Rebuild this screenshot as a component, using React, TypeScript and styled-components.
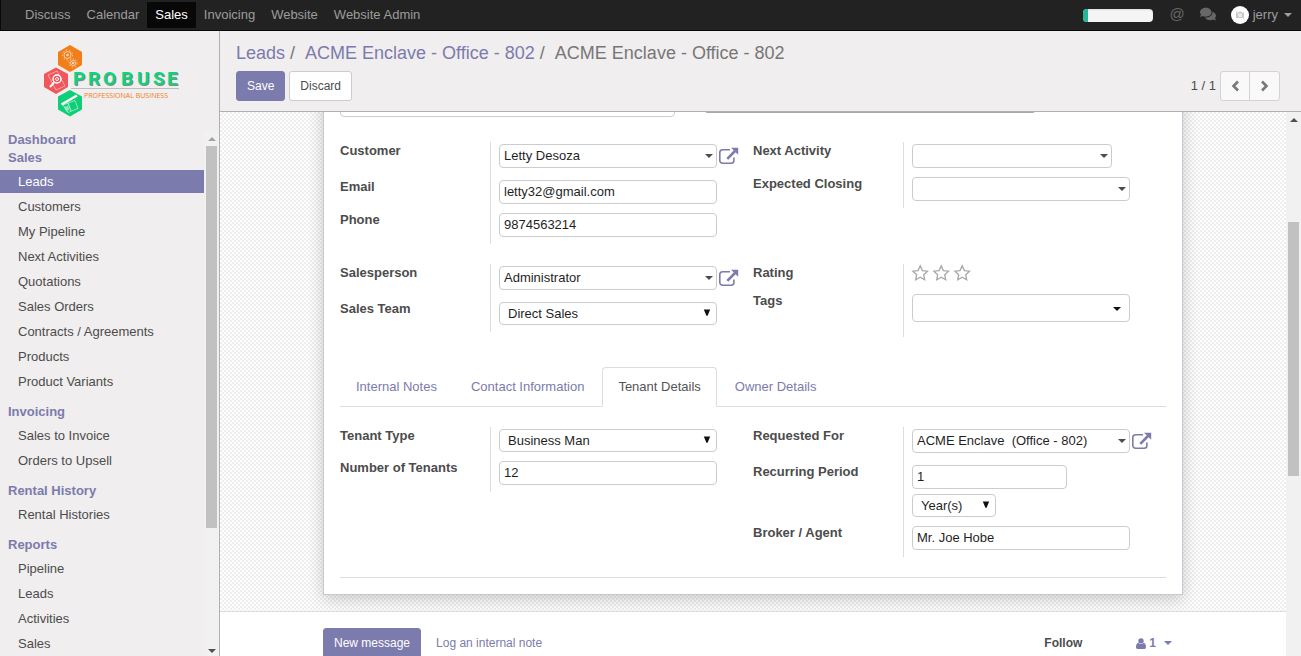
import React from "react";
import styled, { createGlobalStyle, css } from "styled-components";
import { FaComments } from "react-icons/fa";

const purple = "#7c7bad";

const Global = createGlobalStyle`
  *, *::before, *::after { box-sizing: border-box; }
  body { margin: 0; font: 13px/18px "Liberation Sans", Arial, sans-serif; color: #4c4c4c; background: #fff; }
  a { color: ${purple}; text-decoration: none; }
  ul { list-style: none; margin: 0; padding: 0; }
  input, select, button { font-family: inherit; }
`;

const Page = styled.div`
  display: flex;
  flex-direction: column;
  height: 100vh;
  overflow: hidden;
`;

/* ---------- top bar ---------- */
const TopBar = styled.header`
  display: flex;
  justify-content: space-between;
  flex: none;
  height: 31px;
  background: #222;
  border-bottom: 1px solid #080808;
  border-left: 1px solid #080808;
`;
const Menu = styled.nav`
  display: flex;
  padding: 2px 0 2px 16px;
`;
const MenuLink = styled.a<{ $active?: boolean }>`
  padding: 4px 8px;
  color: ${(p) => (p.$active ? "#fff" : "#9d9d9d")};
  background: ${(p) => (p.$active ? "#080808" : "transparent")};
`;
const Tray = styled.div`
  display: flex;
  align-items: center;
  padding-right: 9px;
  color: #9d9d9d;
`;
const Progress = styled.div`
  width: 70px;
  height: 13px;
  margin-right: 16px;
  border-radius: 4px;
  overflow: hidden;
  background: #f5f5f5;
  box-shadow: inset 0 1px 2px rgba(0, 0, 0, 0.1);
`;
const ProgressFill = styled.div`
  height: 100%;
  background: #21b799;
`;
const Caret = styled.span<{ $tone?: string }>`
  flex: none;
  border: 4px solid transparent;
  border-top-color: ${(p) => p.$tone || "currentColor"};
  border-bottom: 0;
`;
const TrayButton = styled.button`
  display: flex;
  align-items: center;
  padding: 0 0 3px;
  margin-right: 15px;
  border: 0;
  background: none;
  color: #676767;
  font-size: 15px;
  line-height: 24px;
`;
const UserButton = styled(TrayButton)`
  gap: 4px;
  margin: 0;
  padding: 0;
  color: #9d9d9d;
  font-size: 13px;
  ${Caret} { margin-left: 2px; }
`;

/* ---------- sidebar ---------- */
const Body = styled.div`
  display: flex;
  flex: 1;
  min-height: 0;
`;
const Side = styled.aside`
  display: flex;
  flex-direction: column;
  flex: none;
  width: 220px;
  background: #f0eeee;
  border-right: 1px solid #afafb6;
`;
const LogoLink = styled.a`
  display: flex;
  flex: none;
  height: 100px;
  padding: 8px 0 0 32px;
`;
const SideScroll = styled.div`
  display: flex;
  flex: 1;
  min-height: 0;
`;
const SideMenu = styled.nav`
  flex: 1;
  overflow: hidden;
`;
const SideHeading = styled.div`
  padding-left: 8px;
  font-weight: bold;
  color: ${purple};
`;
const SideList = styled.ul`
  padding: 2px 0 9px;
`;
const SideItem = styled.li`
  padding: 1px 0;
`;
const SideLink = styled.a<{ $active?: boolean }>`
  display: block;
  padding-left: 18px;
  line-height: 23px;
  color: ${(p) => (p.$active ? "#fff" : "#4c4c4c")};
  background: ${(p) => (p.$active ? purple : "transparent")};
`;

/* ---------- scroll bars ---------- */
const Track = styled.div`
  display: flex;
  flex-direction: column;
  flex: none;
  align-items: center;
  width: 15px;
  padding: 6px 0 3px;
  background: #f1f1f1;
`;
const Arrow = styled.span<{ $down?: boolean; $tone: string }>`
  flex: none;
  border: 4px solid transparent;
  ${(p) =>
    p.$down
      ? css`border-bottom: 0; border-top-color: ${p.$tone}; margin-top: auto;`
      : css`border-top: 0; border-bottom-color: ${p.$tone};`}
`;
const Thumb = styled.div<{ $top: number; $size: number }>`
  width: 11px;
  margin-top: ${(p) => p.$top}px;
  height: ${(p) => p.$size}%;
  background: #c1c1c1;
`;

/* ---------- control panel ---------- */
const Main = styled.main`
  display: flex;
  flex-direction: column;
  flex: 1;
  min-width: 0;
`;
const Panel = styled.div`
  flex: none;
  height: 81px;
  padding: 12px 21px 0 16px;
  background: #f0eeee;
  border-bottom: 1px solid #afafb6;
`;
const Crumbs = styled.ol`
  display: flex;
  margin: 0 0 8px;
  padding: 0;
  list-style: none;
  font-size: 18px;
  line-height: 20px;
  color: #777;
  white-space: pre;
`;
const PanelRow = styled.div`
  display: flex;
  align-items: center;
  gap: 4px;
`;
const Button = styled.button<{ $primary?: boolean }>`
  height: 30px;
  padding: 0 10px;
  border: 1px solid ${(p) => (p.$primary ? purple : "#ccc")};
  border-radius: 3px;
  background: ${(p) => (p.$primary ? purple : "#fff")};
  color: ${(p) => (p.$primary ? "#fff" : "#4c4c4c")};
  font-size: 12px;
`;
const Pager = styled.div`
  display: flex;
  align-items: center;
  gap: 4px;
  margin-left: auto;
`;
const PagerGroup = styled.div`
  display: flex;
`;
const PagerButton = styled.button`
  display: flex;
  align-items: center;
  justify-content: center;
  width: 30px;
  height: 30px;
  padding: 0;
  border: 1px solid #d3d3d3;
  background: #f9f9f9;
  color: #777;
  &:first-child { border-radius: 3px 0 0 3px; }
  &:last-child { border-radius: 0 3px 3px 0; margin-left: -1px; width: 31px; }
`;

/* ---------- form ---------- */
const ScrollRow = styled.div`
  display: flex;
  flex: 1;
  min-height: 0;
`;
const View = styled.div`
  flex: 1;
  min-width: 0;
  overflow: hidden;
`;
const SheetBackdrop = styled.div`
  display: flow-root;
  overflow: hidden;
  padding-bottom: 16px;
  border-bottom: 1px solid #ddd;
  background: repeating-conic-gradient(#eee 0 25%, #fff 0 50%) 0 0 / 4px 4px;
`;
const Sheet = styled.form`
  max-width: 860px;
  margin: -36px auto 0;
  padding: 16px;
  border: 1px solid #c8c8d3;
  background: #fff;
  box-shadow: 0 4px 16px rgba(0, 0, 0, 0.2);
`;
const field = css`
  height: 24px;
  border: 1px solid #ccc;
  border-radius: 4px;
  background: #fff;
  color: #1f1f1f;
  font-size: 13px;
`;
const TopFields = styled.div`
  display: grid;
  grid-template-columns: 335px 330px;
  gap: 30px;
  align-items: start;
  margin-bottom: 25px;
`;
const TextInput = styled.input<{ $width?: number; $short?: boolean }>`
  ${field}
  width: ${(p) => (p.$width ? p.$width + "px" : "100%")};
  padding: 0 4px 2px;
  ${(p) => p.$short && css`height: 20px; border-color: #aaa; border-radius: 2px;`}
`;
const Groups = styled.div<{ $gap: number }>`
  display: grid;
  grid-template-columns: 1fr 1fr;
  align-items: start;
  margin-bottom: ${(p) => p.$gap}px;
`;
const Row = styled.div<{ $height: number }>`
  display: grid;
  grid-template-columns: 150px 1fr;
  min-height: ${(p) => p.$height}px;
`;
const Label = styled.label`
  font-weight: bold;
`;
const Cell = styled.div`
  display: flex;
  align-items: flex-start;
  gap: 2px;
  padding: 2px 0 0 8px;
  border-left: 1px solid #ddd;
`;
const Stack = styled.div`
  display: flex;
  flex-direction: column;
  gap: 5px;
`;
const ComboBox = styled.div<{ $width?: number; $tall?: boolean }>`
  ${field}
  display: flex;
  align-items: center;
  width: ${(p) => p.$width || 218}px;
  padding-right: 3px;
  ${(p) => p.$tall && css`height: 28px; padding: 2px 8px 0 0;`}
`;
const ComboInput = styled.input`
  flex: 1;
  min-width: 0;
  height: 100%;
  padding: 0 0 2px 4px;
  border: 0;
  background: none;
  color: #1f1f1f;
  font-size: 13px;
`;
const SelectWrap = styled.div<{ $width: number }>`
  ${field}
  display: grid;
  align-items: center;
  width: ${(p) => p.$width}px;
  height: 23px;
  padding-right: 5px;
  > * { grid-area: 1 / 1; }
`;
const Select = styled.select`
  appearance: none;
  width: 100%;
  height: 21px;
  padding: 0 8px;
  border: 0;
  background: none;
  color: #1f1f1f;
  font-size: 13px;
`;
const SelectArrow = styled.svg`
  justify-self: end;
  margin-bottom: 2px;
  pointer-events: none;
`;
const IconButton = styled.button`
  display: flex;
  padding: 0;
  border: 0;
  background: none;
  color: ${purple};
`;
const Stars = styled.div`
  display: flex;
  gap: 4px;
`;
const Tabs = styled.div`
  display: flex;
  gap: 2px;
  height: 40px;
  margin-bottom: 20px;
  border-bottom: 1px solid #ddd;
`;
const Tab = styled.button<{ $active?: boolean }>`
  height: 40px;
  padding: 0 15px 2px;
  border: 1px solid ${(p) => (p.$active ? "#ddd" : "transparent")};
  border-bottom-color: ${(p) => (p.$active ? "#fff" : "transparent")};
  border-radius: 4px 4px 0 0;
  background: ${(p) => (p.$active ? "#fff" : "none")};
  color: ${(p) => (p.$active ? "#555" : purple)};
  font-size: 13px;
`;
const Rule = styled.hr`
  margin: 0;
  border: 0;
  border-top: 1px solid #ddd;
`;

/* ---------- chatter ---------- */
const Chatter = styled.section`
  display: flex;
  align-items: center;
  max-width: 860px;
  margin: 0 auto;
  padding: 16px 0;
  font-size: 12px;
`;
const LogLink = styled.a`
  margin-left: 15px;
`;
const Followers = styled.div`
  display: flex;
  align-items: center;
  gap: 54px;
  margin-left: auto;
  padding-right: 11px;
`;
const PlainButton = styled.button<{ $purple?: boolean }>`
  display: flex;
  align-items: center;
  gap: 3px;
  padding: 0;
  border: 0;
  background: none;
  font-size: 12px;
  font-weight: bold;
  color: ${(p) => (p.$purple ? purple : "#4c4c4c")};
  ${Caret} { margin-left: 5px; }
`;

const letters: [string, number][] = [["P", 73], ["R", 88], ["O", 103], ["B", 121], ["U", 137], ["S", 153], ["E", 167]];

const Logo = () => (
  <svg width="152" height="84" viewBox="32 39 152 84" role="img" aria-label="Probuse Professional Business">
    <path d="M70 45l12 7v13l-12 7-12-7V52z" fill="#f07f1a" />
    <path d="M56 67.500l12 6.500v13l-12 7-12-7V74z" fill="#f0565a" />
    <path d="M70 90l12 6.500v13l-12 7-12-7v-13z" fill="#0fcf76" />
    <g fill="none" stroke="#fff">
      <circle cx="67.500" cy="55" r="3.500" strokeOpacity=".6" />
      <circle cx="67.500" cy="55" r="5" strokeDasharray="1.500 2" strokeOpacity=".6" />
      <circle cx="67.500" cy="55" r=".8" />
      <circle cx="73" cy="63" r="2.500" strokeOpacity=".6" />
      <circle cx="73" cy="63" r="4" strokeDasharray="1.500 1.500" strokeOpacity=".6" />
      <circle cx="73" cy="63" r=".6" />
      <path d="M48 75l9-4 8 15-9 4z" strokeOpacity=".45" />
      <circle cx="57" cy="79" r="4" strokeWidth="1.500" />
      <circle cx="57" cy="79" r="1.500" strokeWidth="1" />
      <path d="M54 82.500L50 87" strokeWidth="2" />
      <path d="M61.500 104.500L77 95.500" strokeWidth="2.500" />
      <path d="M63 105l12-4.500 3 8-10 4z" strokeOpacity=".5" />
      <path d="M68 103l3 8" strokeOpacity=".7" />
    </g>
    <path d="M64 107l4-1.500 1.500 4-3 2z" fill="#fff" fillOpacity=".5" />
    <path d="M71 88.500h108" stroke="#bdbdbd" />
    <g fontFamily="Roboto, sans-serif" fontWeight="bold" fontSize="19">
      {letters.map(([letter, x]) => (
        <g key={letter}>
          <text x={x + 1} y="86" fill="#8a8a8a">{letter}</text>
          <text x={x} y="85" fill="#0fd47c">{letter}</text>
        </g>
      ))}
    </g>
    <text x="84" y="98" fontFamily="'Open Sans', sans-serif" fontSize="7" fill="#f07f1a">PROFESSIONAL BUSINESS</text>
  </svg>
);

const Avatar = () => (
  <svg width="18" height="18" viewBox="0 0 18 18" aria-hidden="true">
    <circle cx="9" cy="9" r="9" fill="#fff" />
    <path d="M5 6.500h2l1-1h2l1 1h2v5.500H5z" fill="#c9c9c9" />
    <circle cx="9" cy="9.200" r="2" fill="#eee" />
    <path d="M4 4l10 10" stroke="#e4e4e4" />
  </svg>
);

const Person = () => (
  <svg width="10" height="11" viewBox="0 0 10 11" aria-hidden="true" fill={purple}>
    <circle cx="5" cy="2.900" r="2.700" />
    <path d="M2.300 4.800C.8 5.200 0 6.800 0 8.900 0 10.200.8 11 2 11h6c1.200 0 2-.8 2-2.100 0-2.100-.8-3.700-2.300-4.100C7 5.600 6 6.100 5 6.100S3 5.600 2.300 4.800z" />
  </svg>
);

const Star = () => (
  <svg width="17" height="16" viewBox="0 1 17 16" overflow="visible" aria-hidden="true">
    <path d="M8.200 .9l2.200 4.700 5.100.6-3.800 3.500 1 5.100-4.500-2.500L3.700 14.800l1-5.100L.9 6.200l5.100-.6z" fill="none" stroke="#a8a8a8" strokeWidth="1.300" />
  </svg>
);

const External = ({ label }: { label: string }) => (
  <IconButton type="button" aria-label={label}>
    <svg width="20" height="21" viewBox="0 0 20 21" aria-hidden="true">
      <path d="M11 5.800H3.500A2.700 2.700 0 0 0 .8 8.500v8A2.700 2.700 0 0 0 3.500 19.200h8.700a2.700 2.700 0 0 0 2.700-2.700V13.500" fill="none" stroke={purple} strokeWidth="1.600" />
      <path d="M8.300 14.800L16 7" stroke={purple} strokeWidth="2.600" />
      <path d="M12 3.700h7.200v7z" fill={purple} />
    </svg>
  </IconButton>
);

const Chevron = ({ right }: { right?: boolean }) => (
  <svg width="10" height="12" viewBox="0 0 10 12" aria-hidden="true">
    <path d={right ? "M2 1.500L6.500 6 2 10.500" : "M8 1.500L3.500 6 8 10.500"} fill="none" stroke="#777" strokeWidth="2.600" />
  </svg>
);

const slug = (s: string) => s.toLowerCase().replace(/[^a-z]+/g, "-");

const FormRow = ({ label, height, children }: { label: string; height: number; children: React.ReactNode }) => (
  <Row $height={height}>
    <Label htmlFor={slug(label)}>{label}</Label>
    <Cell>{children}</Cell>
  </Row>
);

const Text = ({ label, value }: { label: string; value: string }) => (
  <FormRow label={label} height={33}>
    <TextInput id={slug(label)} $width={218} defaultValue={value} />
  </FormRow>
);

type ComboProps = { label: string; value?: string; width?: number; tall?: boolean; open?: boolean };
const Combo = ({ label, value = "", width, tall, open }: ComboProps) => (
  <FormRow label={label} height={tall ? 45 : open ? 36 : 33}>
    <ComboBox $width={width} $tall={tall}>
      <ComboInput id={slug(label)} defaultValue={value} />
      <Caret $tone={tall ? "#111" : "#4c4c4c"} />
    </ComboBox>
    {open && <External label={`Open ${label}`} />}
  </FormRow>
);

const Picker = ({ id, label, value, width = 218 }: { id?: string; label?: string; value: string; width?: number }) => (
  <SelectWrap $width={width}>
    <Select id={id} aria-label={label}>
      <option>{value}</option>
    </Select>
    <SelectArrow width="8" height="7" viewBox="0 0 8 7" aria-hidden="true">
      <path d="M.8 .5h6.400L4.600 6.800H3.400z" fill="#111" />
    </SelectArrow>
  </SelectWrap>
);

const menu = ["Discuss", "Calendar", "Sales", "Invoicing", "Website", "Website Admin"];
const sections: [string, string[]][] = [
  ["Sales", ["Leads", "Customers", "My Pipeline", "Next Activities", "Quotations", "Sales Orders", "Contracts / Agreements", "Products", "Product Variants"]],
  ["Invoicing", ["Sales to Invoice", "Orders to Upsell"]],
  ["Rental History", ["Rental Histories"]],
  ["Reports", ["Pipeline", "Leads", "Activities", "Sales"]],
];
const tabs = ["Internal Notes", "Contact Information", "Tenant Details", "Owner Details"];

export default function App() {
  return (
    <Page>
      <Global />
      <TopBar>
        <Menu>
          {menu.map((m) => (
            <MenuLink key={m} href="#" $active={m === "Sales"}>{m}</MenuLink>
          ))}
        </Menu>
        <Tray>
          <Progress><ProgressFill style={{ width: "6%" }} /></Progress>
          <TrayButton aria-label="Mentions">@</TrayButton>
          <TrayButton aria-label="Conversations"><FaComments size={16} /></TrayButton>
          <UserButton>
            <Avatar />
            jerry
            <Caret />
          </UserButton>
        </Tray>
      </TopBar>
      <Body>
        <Side>
          <LogoLink href="#"><Logo /></LogoLink>
          <SideScroll>
            <SideMenu>
              <SideHeading>Dashboard</SideHeading>
              {sections.map(([title, items], s) => (
                <React.Fragment key={title}>
                  <SideHeading>{title}</SideHeading>
                  <SideList>
                    {items.map((item, i) => (
                      <SideItem key={item}>
                        <SideLink href="#" $active={s === 0 && i === 0}>{item}</SideLink>
                      </SideItem>
                    ))}
                  </SideList>
                </React.Fragment>
              ))}
            </SideMenu>
            <Track>
              <Arrow $tone="#a3a3a3" />
              <Thumb $top={5} $size={74} />
              <Arrow $down $tone="#505050" />
            </Track>
          </SideScroll>
        </Side>
        <Main>
          <Panel>
            <Crumbs>
              <li><a href="#">Leads</a>{" /  "}</li>
              <li><a href="#">ACME Enclave - Office - 802</a>{" /  "}</li>
              <li>ACME Enclave - Office - 802</li>
            </Crumbs>
            <PanelRow>
              <Button $primary>Save</Button>
              <Button>Discard</Button>
              <Pager>
                1 / 1
                <PagerGroup>
                  <PagerButton aria-label="Previous"><Chevron /></PagerButton>
                  <PagerButton aria-label="Next"><Chevron right /></PagerButton>
                </PagerGroup>
              </Pager>
            </PanelRow>
          </Panel>
          <ScrollRow>
            <View>
              <SheetBackdrop>
                <Sheet>
                  <TopFields>
                    <TextInput aria-label="Expected Revenue" />
                    <TextInput aria-label="Probability" $short />
                  </TopFields>
                  <Groups $gap={20}>
                    <div>
                      <Combo label="Customer" value="Letty Desoza" open />
                      <Text label="Email" value="letty32@gmail.com" />
                      <Text label="Phone" value="9874563214" />
                    </div>
                    <div>
                      <Combo label="Next Activity" width={200} />
                      <Combo label="Expected Closing" />
                    </div>
                  </Groups>
                  <Groups $gap={30}>
                    <div>
                      <Combo label="Salesperson" value="Administrator" open />
                      <FormRow label="Sales Team" height={32}>
                        <Picker id="sales-team" value="Direct Sales" />
                      </FormRow>
                    </div>
                    <div>
                      <FormRow label="Rating" height={28}>
                        <Stars id="rating"><Star /><Star /><Star /></Stars>
                      </FormRow>
                      <Combo label="Tags" tall />
                    </div>
                  </Groups>
                  <Tabs role="tablist">
                    {tabs.map((t) => (
                      <Tab key={t} type="button" role="tab" aria-selected={t === "Tenant Details"} $active={t === "Tenant Details"}>{t}</Tab>
                    ))}
                  </Tabs>
                  <Groups $gap={20}>
                    <div>
                      <FormRow label="Tenant Type" height={32}>
                        <Picker id="tenant-type" value="Business Man" />
                      </FormRow>
                      <Text label="Number of Tenants" value="12" />
                    </div>
                    <div>
                      <Combo label="Requested For" value="ACME Enclave  (Office - 802)" open />
                      <FormRow label="Recurring Period" height={61}>
                        <Stack>
                          <TextInput id="recurring-period" $width={155} defaultValue="1" />
                          <Picker label="Period unit" value="Year(s)" width={84} />
                        </Stack>
                      </FormRow>
                      <Text label="Broker / Agent" value="Mr. Joe Hobe" />
                    </div>
                  </Groups>
                  <Rule />
                </Sheet>
              </SheetBackdrop>
              <Chatter>
                <Button $primary>New message</Button>
                <LogLink href="#">Log an internal note</LogLink>
                <Followers>
                  <PlainButton>Follow</PlainButton>
                  <PlainButton $purple>
                    <Person />1<Caret />
                  </PlainButton>
                </Followers>
              </Chatter>
            </View>
            <Track>
              <Arrow $tone="#505050" />
              <Thumb $top={100} $size={47.5} />
            </Track>
          </ScrollRow>
        </Main>
      </Body>
    </Page>
  );
}
